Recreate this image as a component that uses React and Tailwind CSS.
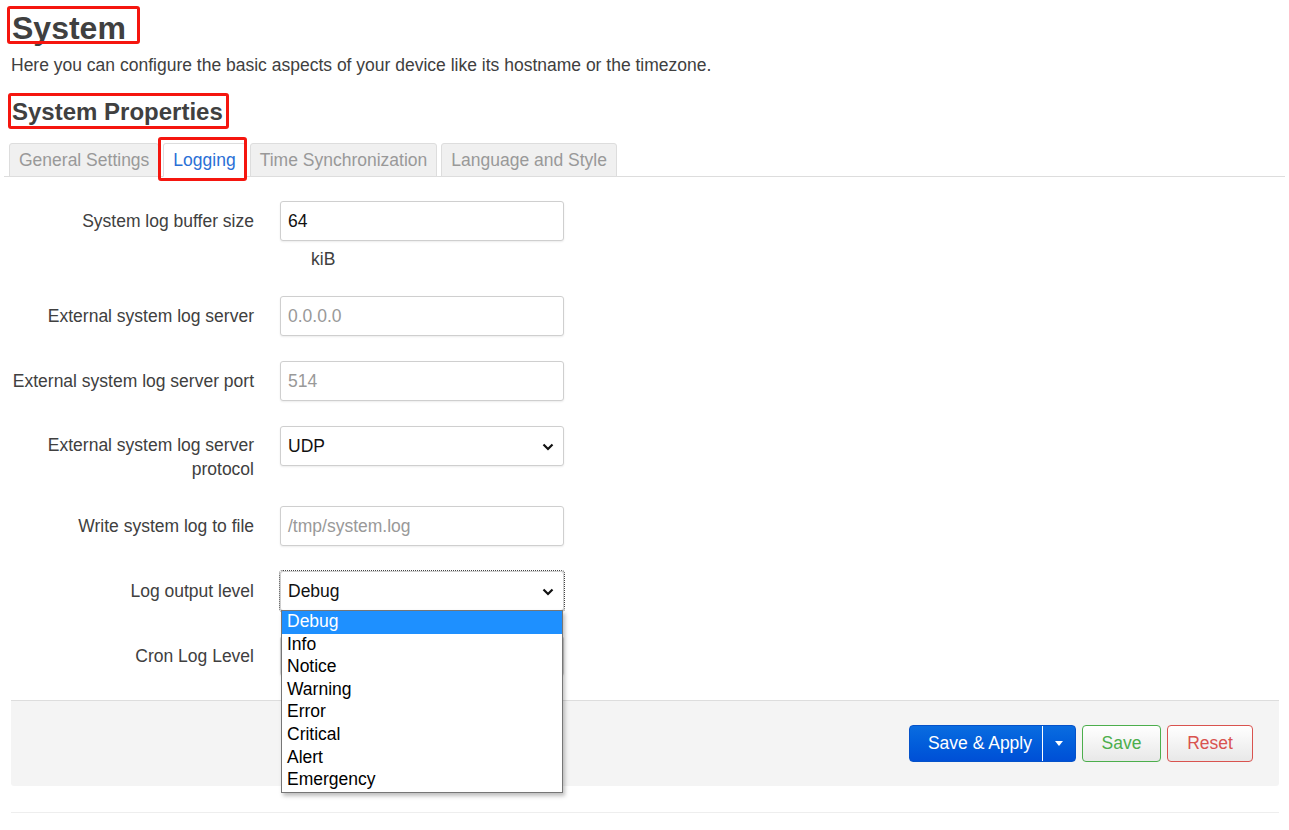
import React from 'react';

const fieldBase =
    'w-[284px] h-[40px] rounded-[3px] border border-[#cfcfcf] bg-white shadow-[0_1px_2px_rgba(0,0,0,0.08)] text-[17.5px]';

const TextField = ({ value, placeholder }) => (
    <div className={`${fieldBase} flex items-center pl-[7px]`}>
        {value ? <span className="text-[#111]">{value}</span> : <span className="text-[#999]">{placeholder}</span>}
    </div>
);

const Chevron = () => (
    <svg width="12" height="8" viewBox="0 0 12 8" className="absolute right-[9px] top-[16px]">
        <path d="M1.5 1.5l4.5 4.5 4.5-4.5" fill="none" stroke="#111" strokeWidth="2.2" />
    </svg>
);

const SelectField = ({ value, focused, children }) => (
    <div
        className={`${fieldBase} relative flex items-center pl-[7px] ${focused ? 'outline-1 outline-dotted outline-[#444]' : ''}`}
    >
        {value && <span className="text-[#111]">{value}</span>}
        <Chevron />
        {children}
    </div>
);

const levels = ['Debug', 'Info', 'Notice', 'Warning', 'Error', 'Critical', 'Alert', 'Emergency'];

const Row = ({ label, twoLine, children }) => (
    <div className="flex items-start gap-[26px]">
        <div
            className={`w-[243px] text-right text-[17.5px] ${twoLine ? 'pt-[7px] leading-[24px]' : 'h-[40px] leading-[40px]'}`}
        >
            {label}
        </div>
        <div>{children}</div>
    </div>
);

const RedBox = ({ className }) => (
    <span className={`pointer-events-none absolute z-20 rounded-[3px] border-[3px] border-[#f5160f] ${className}`} />
);

const tabs = ['General Settings', 'Logging', 'Time Synchronization', 'Language and Style'];

export default function App() {
    return (
        <div className="min-h-screen bg-white px-[4px] font-['Liberation_Sans',Arial,sans-serif] text-[#404040]">
            {/* Page header */}
            <div className="ml-[8px]">
                <h1 className="relative mt-[10px] inline-block text-[32px] font-bold leading-[36px]">
                    System
                    <RedBox className="-left-[5px] -top-[4px] bottom-[2px] -right-[14px]" />
                </h1>
                <p className="mt-[7px] -ml-[1px] text-[17.5px] leading-[24px]">
                    Here you can configure the basic aspects of your device like its hostname or the timezone.
                </p>
                <h2 className="relative mt-[20px] inline-block text-[24px] font-bold leading-[30px]">
                    System Properties
                    <RedBox className="-left-[4px] -top-[4px] -bottom-[2px] -right-[6px]" />
                </h2>
            </div>

            {/* Tabs */}
            <ul className="mt-[16px] flex gap-[4px] border-b border-[#ddd] pl-[5px]">
                {tabs.map((t) => {
                    const active = t === 'Logging';
                    return (
                        <li
                            key={t}
                            className={`relative -mb-px flex h-[34px] items-center rounded-t-[3px] border px-[9px] text-[17.5px] ${
                                active
                                    ? 'border-[#ddd] border-b-white bg-white text-[#2a6fd6]'
                                    : 'border-[#ddd] bg-[#f0f0f0] text-[#999]'
                            }`}
                        >
                            {t}
                            {active && <RedBox className="-left-[6px] -top-[7px] -bottom-[5px] -right-[2px]" />}
                        </li>
                    );
                })}
            </ul>

            {/* Form */}
            <div className="ml-[7px] mr-[6px] mt-[24px]">
                <div className="flex flex-col gap-[25px]">
                    <Row label="System log buffer size">
                        <TextField value="64" />
                        <div className="mt-[6px] pl-[31px] text-[17.5px] leading-[24px]">kiB</div>
                    </Row>
                    <Row label="External system log server">
                        <TextField placeholder="0.0.0.0" />
                    </Row>
                    <Row label="External system log server port">
                        <TextField placeholder="514" />
                    </Row>
                    <Row label={<>External system log server<br />protocol</>} twoLine>
                        <SelectField value="UDP" />
                    </Row>
                    <Row label="Write system log to file">
                        <TextField placeholder="/tmp/system.log" />
                    </Row>
                    <Row label="Log output level">
                        <SelectField value="Debug" focused>
                            {/* open dropdown list */}
                            <div className="absolute left-0 top-[38px] z-10 w-[282px] border border-[#767676] bg-white shadow-[2px_3px_4px_rgba(0,0,0,0.25)]">
                                {levels.map((l, i) => (
                                    <div
                                        key={l}
                                        className={`h-[22.6px] pl-[5px] text-[17.5px] leading-[21.6px] ${
                                            i === 0 ? 'bg-[#1e90ff] text-white' : 'text-black'
                                        }`}
                                    >
                                        {l}
                                    </div>
                                ))}
                            </div>
                        </SelectField>
                    </Row>
                    <Row label="Cron Log Level">
                        {/* value hidden behind the open list */}
                        <SelectField />
                    </Row>
                </div>

                {/* Footer actions */}
                <div className="mt-[24px] flex h-[86px] items-center justify-end gap-[6px] rounded-b-[3px] border-t border-[#ddd] bg-[#f4f4f4] pr-[26px]">
                    <div className="flex h-[37px] overflow-hidden rounded-[4px] border border-[#0552c9] bg-gradient-to-b from-[#0a6ce0] to-[#004fd6] text-[17.5px] text-white">
                        <span className="flex items-center pl-[18px] pr-[10px]">Save &amp; Apply</span>
                        <span className="w-px bg-white" />
                        <span className="flex w-[32px] items-center justify-center">
                            <svg width="8" height="5" viewBox="0 0 8 5">
                                <path d="M0 0h8L4 5z" fill="#fff" />
                            </svg>
                        </span>
                    </div>
                    <button className="h-[37px] w-[79px] rounded-[4px] border border-[#4cae4c] bg-gradient-to-b from-white to-[#e8e8e8] text-[17.5px] text-[#4cae4c]">
                        Save
                    </button>
                    <button className="h-[37px] w-[86px] rounded-[4px] border border-[#d9534f] bg-gradient-to-b from-white to-[#e8e8e8] text-[17.5px] text-[#d9534f]">
                        Reset
                    </button>
                </div>

                <div className="mt-[26px] border-t border-[#eee]" />
            </div>
        </div>
    );
}
